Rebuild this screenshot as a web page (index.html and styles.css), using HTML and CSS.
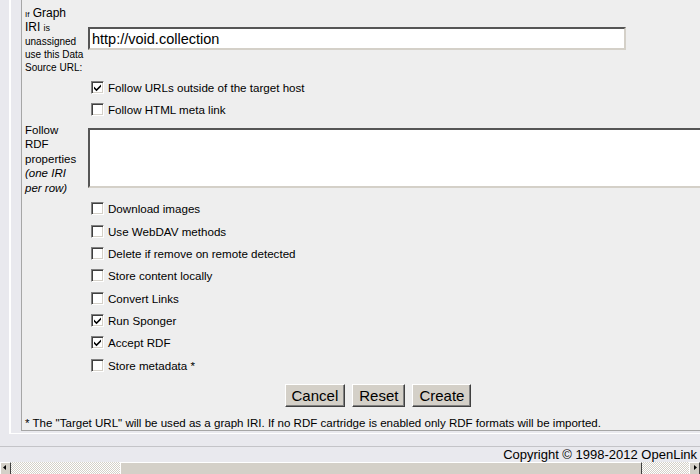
FILE: index.html
```html
<!DOCTYPE html>
<html>
<head>
<meta charset="utf-8">
<link rel="stylesheet" href="styles.css">
</head>
<body>
<div class="page">
  <div class="panel">
    <div class="box">
      <div class="form">
        <div class="lbl lbl-graph"><span class="t8">If</span> <span class="t11">Graph</span><br><span class="t11">IRI</span> <span class="t9">is</span><br><span class="t10">unassigned use this Data Source URL:</span></div>
        <div class="field field-url"><input class="url" type="text" value="http://void.collection"></div>

        <div></div>
        <div class="chk"><span class="cb on"><svg viewBox="0 0 9 9" width="9" height="9"><path d="M1 3.5 L3.5 6 L8 1.5 L8 3.8 L3.5 8.2 L1 5.8 Z" fill="#000"/></svg></span>Follow URLs outside of the target host</div>
        <div></div>
        <div class="chk"><span class="cb"></span>Follow HTML meta link</div>

        <div class="lbl lbl-rdf">Follow<br>RDF<br>properties<br><em>(one IRI<br>per row)</em></div>
        <div class="field field-ta"><textarea class="ta"></textarea></div>

        <div class="gap"></div>
        <div class="chk first"><span class="cb"></span>Download images</div>
        <div></div>
        <div class="chk"><span class="cb"></span>Use WebDAV methods</div>
        <div></div>
        <div class="chk"><span class="cb"></span>Delete if remove on remote detected</div>
        <div></div>
        <div class="chk"><span class="cb"></span>Store content locally</div>
        <div></div>
        <div class="chk"><span class="cb"></span>Convert Links</div>
        <div></div>
        <div class="chk"><span class="cb on"><svg viewBox="0 0 9 9" width="9" height="9"><path d="M1 3.5 L3.5 6 L8 1.5 L8 3.8 L3.5 8.2 L1 5.8 Z" fill="#000"/></svg></span>Run Sponger</div>
        <div></div>
        <div class="chk"><span class="cb on"><svg viewBox="0 0 9 9" width="9" height="9"><path d="M1 3.5 L3.5 6 L8 1.5 L8 3.8 L3.5 8.2 L1 5.8 Z" fill="#000"/></svg></span>Accept RDF</div>
        <div></div>
        <div class="chk"><span class="cb"></span>Store metadata *</div>
      </div>
      <div class="buttons">
        <button class="btn">Cancel</button>
        <button class="btn">Reset</button>
        <button class="btn">Create</button>
      </div>
      <div class="note">* The "Target URL" will be used as a graph IRI. If no RDF cartridge is enabled only RDF formats will be imported.</div>
    </div>
  </div>
  <div class="footer">Copyright © 1998-2012 OpenLink</div>
  <div class="hscroll">
    <div class="arrow left"><svg viewBox="0 0 11 11" width="11" height="11"><path d="M6 3 L3 5.5 L6 8 Z" fill="#000"/></svg></div>
    <div class="track t1"></div>
    <div class="thumb"></div>
    <div class="track t2"></div>
    <div class="arrow right"><svg viewBox="0 0 11 11" width="11" height="11"><path d="M5 3 L8 5.5 L5 8 Z" fill="#000"/></svg></div>
  </div>
</div>
</body>
</html>
```
FILE: styles.css
```css
html, body {
  margin: 0;
  padding: 0;
}
body {
  width: 700px;
  height: 474px;
  overflow: hidden;
  background: #e9e9ee;
  font-family: "Liberation Sans", Arial, sans-serif;
  color: #000;
}
.page {
  display: flex;
  flex-direction: column;
  height: 474px;
}
.panel {
  margin-left: 9px;
  border-left: 2px solid #ffffff;
  border-bottom: 1px solid #ffffff;
  padding-left: 10px;
  padding-bottom: 2px;
}
.box {
  background: #eeeeee;
  border-left: 1px solid #a6a6a6;
  border-bottom: 1px solid #a6a6a6;
  padding-left: 3px;
  height: 431px;
  box-sizing: border-box;
}
.form {
  display: grid;
  grid-template-columns: 63px 1fr;
}
.lbl {
  font-size: 11.5px;
  line-height: 14.5px;
}
.lbl-graph {
  padding-top: 7px;
  height: 70px;
  box-sizing: border-box;
  line-height: 13px;
}
.t8 { font-size: 8px; }
.t9 { font-size: 9px; }
.t10 { font-size: 10px; }
.t11 { font-size: 12px; }
.field-url {
  padding-top: 27px;
  height: 76px;
  box-sizing: border-box;
}
.url {
  display: block;
  width: 538px;
  height: 23px;
  box-sizing: border-box;
  margin: 0;
  padding: 1px 2px 0;
  font-family: "Liberation Sans", Arial, sans-serif;
  font-size: 14.5px;
  color: #000;
  background: #fff;
  border-style: solid;
  border-width: 2px;
  border-color: #555 #d4d0c8 #d4d0c8 #555;
  outline: none;
}
.chk {
  height: 22.333px;
  display: flex;
  align-items: center;
  font-size: 11.6px;
  padding-left: 3px;
}
.cb {
  width: 13px;
  height: 13px;
  box-sizing: border-box;
  background: #fff;
  border-style: solid;
  border-width: 1px;
  border-color: #808080 #ffffff #ffffff #808080;
  box-shadow: inset 1px 1px 0 #404040, inset -1px -1px 0 #d4d0c8;
  margin-right: 4px;
  display: flex;
  align-items: center;
  justify-content: center;
  flex: none;
}
.cb svg {
  display: block;
}
.lbl-rdf {
  padding-top: 2px;
  height: 77px;
  box-sizing: border-box;
}
.field-ta {
  padding-top: 7px;
  height: 77px;
  box-sizing: border-box;
}
.ta {
  display: block;
  width: 620px;
  height: 60px;
  box-sizing: border-box;
  margin: 0;
  resize: none;
  background: #fff;
  border-style: solid;
  border-width: 2px;
  border-color: #555 #d4d0c8 #d4d0c8 #555;
  outline: none;
}
.buttons {
  display: flex;
  justify-content: center;
  gap: 7px;
  margin-top: 8px;
  padding-left: 31px;
}
.btn {
  height: 23px;
  padding: 0 6px;
  margin: 0;
  background: #d4d0c8;
  font-family: "Liberation Sans", Arial, sans-serif;
  font-size: 15px;
  color: #000;
  border-style: solid;
  border-width: 1px;
  border-color: #ffffff #404040 #404040 #ffffff;
  box-shadow: inset -1px -1px 0 #808080;
  line-height: 19px;
}
.note {
  font-size: 11.55px;
  line-height: 14px;
  margin-top: 9px;
}
.footer {
  margin-top: 12px;
  border-top: 1px solid #c4c4c8;
  text-align: right;
  font-size: 13px;
  line-height: 15px;
  height: 15px;
  padding-right: 3px;
}
.hscroll {
  display: flex;
  height: 16px;
  margin-top: 0;
}
.arrow {
  width: 11px;
  height: 16px;
  box-sizing: border-box;
  background: #d4d0c8;
  border-style: solid;
  border-width: 1px;
  border-color: #ffffff #404040 #404040 #ffffff;
  flex: none;
}
.arrow svg { display: block; margin: -1px 0 0 -1px; }
.track {
  background-color: #ffffff;
  background-image: repeating-conic-gradient(#d4d0c8 0 25%, #ffffff 0 50%);
  background-size: 2px 2px;
}
.t1 { width: 109px; flex: none; }
.t2 { flex: 1; }
.thumb {
  width: 522px;
  flex: none;
  background: #d4d0c8;
  box-sizing: border-box;
  border-style: solid;
  border-width: 1px;
  border-color: #ffffff #404040 #404040 #ffffff;
}
```
